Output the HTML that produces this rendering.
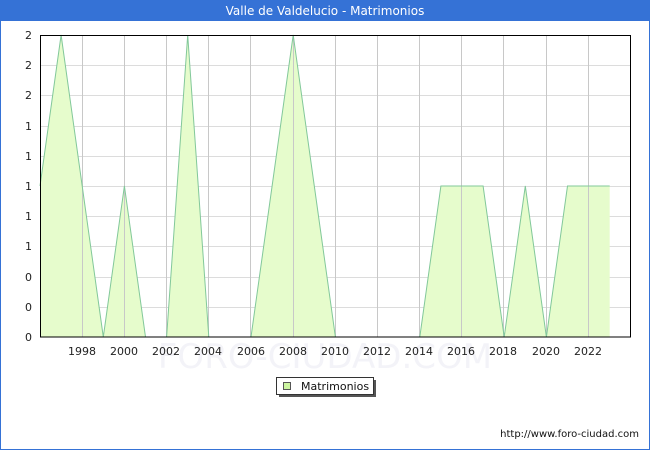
<!DOCTYPE html>
<html><head><meta charset="utf-8"><style>
html,body{margin:0;padding:0;width:650px;height:450px;overflow:hidden;background:#fff}
text{font-family:"DejaVu Sans","Liberation Sans",sans-serif}
</style></head><body>
<svg width="650" height="450" xmlns="http://www.w3.org/2000/svg">
<rect x="0.5" y="0.5" width="649" height="449" fill="#fff" stroke="#3572d6"/>
<rect x="0" y="0" width="650" height="21" fill="#3572d6"/>
<text x="325" y="15" fill="#fff" font-size="12" text-anchor="middle">Valle de Valdelucio - Matrimonios</text>
<text x="325" y="368" fill="#f3f3f8" font-size="34" text-anchor="middle">FORO-CIUDAD.COM</text>
<g stroke="#dcdcdc" stroke-width="1">
<line x1="40" x2="631" y1="65.5" y2="65.5"/><line x1="40" x2="631" y1="95.5" y2="95.5"/><line x1="40" x2="631" y1="126.5" y2="126.5"/><line x1="40" x2="631" y1="156.5" y2="156.5"/><line x1="40" x2="631" y1="186.5" y2="186.5"/><line x1="40" x2="631" y1="216.5" y2="216.5"/><line x1="40" x2="631" y1="246.5" y2="246.5"/><line x1="40" x2="631" y1="277.5" y2="277.5"/><line x1="40" x2="631" y1="307.5" y2="307.5"/>
</g>
<polygon fill="#e6fccc" points="40,337 40,186 61.1,35 82.2,186 103.3,337 124.4,186 145.5,337 166.6,337 187.7,35 208.8,337 229.9,337 251,337 272.1,186 293.2,35 314.3,186 335.4,337 356.5,337 377.6,337 398.7,337 419.8,337 440.9,186 462,186 483.1,186 504.2,337 525.3,186 546.4,337 567.5,186 588.6,186 609.7,186 609.7,337"/>
<g stroke="#c8c8c8" stroke-width="1">
<line x1="82.5" x2="82.5" y1="35" y2="337"/><line x1="124.5" x2="124.5" y1="35" y2="337"/><line x1="166.5" x2="166.5" y1="35" y2="337"/><line x1="208.5" x2="208.5" y1="35" y2="337"/><line x1="250.5" x2="250.5" y1="35" y2="337"/><line x1="293.5" x2="293.5" y1="35" y2="337"/><line x1="335.5" x2="335.5" y1="35" y2="337"/><line x1="377.5" x2="377.5" y1="35" y2="337"/><line x1="419.5" x2="419.5" y1="35" y2="337"/><line x1="461.5" x2="461.5" y1="35" y2="337"/><line x1="503.5" x2="503.5" y1="35" y2="337"/><line x1="546.5" x2="546.5" y1="35" y2="337"/><line x1="588.5" x2="588.5" y1="35" y2="337"/>
</g>
<polyline fill="none" stroke="#82c89a" stroke-width="1" points="40,186 61.1,35 82.2,186 103.3,337 124.4,186 145.5,337 166.6,337 187.7,35 208.8,337 229.9,337 251,337 272.1,186 293.2,35 314.3,186 335.4,337 356.5,337 377.6,337 398.7,337 419.8,337 440.9,186 462,186 483.1,186 504.2,337 525.3,186 546.4,337 567.5,186 588.6,186 609.7,186"/>
<rect x="40.5" y="35.5" width="590" height="301.5" fill="none" stroke="#000" stroke-width="1"/>
<g font-size="11" fill="#222" text-anchor="end">
<text x="32" y="39">2</text><text x="32" y="69">2</text><text x="32" y="99">2</text><text x="32" y="130">1</text><text x="32" y="160">1</text><text x="32" y="190">1</text><text x="32" y="220">1</text><text x="32" y="250">1</text><text x="32" y="281">0</text><text x="32" y="311">0</text><text x="32" y="341">0</text>
</g>
<g font-size="11" fill="#222" text-anchor="middle">
<text x="82" y="355">1998</text><text x="124" y="355">2000</text><text x="166" y="355">2002</text><text x="208" y="355">2004</text><text x="251" y="355">2006</text><text x="293" y="355">2008</text><text x="335" y="355">2010</text><text x="377" y="355">2012</text><text x="419" y="355">2014</text><text x="461" y="355">2016</text><text x="503" y="355">2018</text><text x="546" y="355">2020</text><text x="588" y="355">2022</text>
</g>
<rect x="279" y="380" width="97" height="17" fill="#555"/>
<rect x="276.5" y="377.5" width="97" height="17" fill="#fff" stroke="#333"/>
<rect x="283.5" y="382.5" width="7" height="7" fill="#ccf5a0" stroke="#555"/>
<text x="301" y="390" font-size="11" fill="#111">Matrimonios</text>
<text x="639" y="437" font-size="10" fill="#111" text-anchor="end">http://www.foro-ciudad.com</text>
</svg>
</body></html>
